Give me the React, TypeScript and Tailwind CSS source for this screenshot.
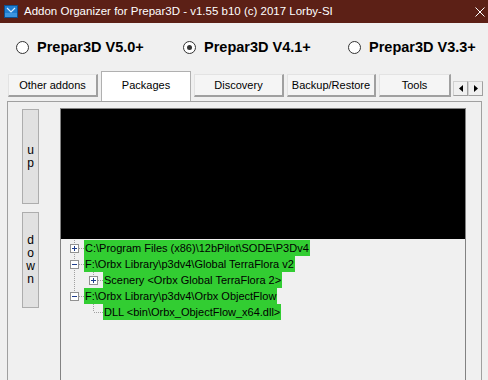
import React from 'react';

const font = { fontFamily: '"Liberation Sans", Arial, sans-serif' };

function Radio({ label, checked, width }: { label: string; checked?: boolean; width: string }) {
    return (
        <div className={`flex items-center gap-[8px] ${width}`}>
            <div className="w-[13px] h-[13px] rounded-full border border-[#333333] bg-white flex items-center justify-center shrink-0">
                {checked && <div className="w-[5px] h-[5px] rounded-full bg-[#333333]" />}
            </div>
            <span className="text-[14.5px] font-bold text-black leading-none whitespace-nowrap">{label}</span>
        </div>
    );
}

function Tab({ label, selected, width = 'w-[90px]' }: { label: string; selected?: boolean; width?: string }) {
    if (selected) {
        return (
            <div className={`${width} h-[30px] bg-white border border-[#b0b0b0] border-b-0 flex items-center justify-center text-[11px] text-black pb-[3px]`}>
                {label}
            </div>
        );
    }
    return (
        <div className={`${width} h-[23px] mt-[3px] bg-[#f5f5f5] border-t border-l border-[#e3e3e3] border-r-2 border-r-[#a0a0a0] border-b-2 border-b-[#a0a0a0] flex items-center justify-center text-[11px] text-black`}>
            {label}
        </div>
    );
}

interface Node {
    level: number;
    label: string;
}

const nodes: Node[] = [
    { level: 0, label: 'C:\\Program Files (x86)\\12bPilot\\SODE\\P3Dv4' },
    { level: 0, label: 'F:\\Orbx Library\\p3dv4\\Global TerraFlora v2' },
    { level: 1, label: 'Scenery <Orbx Global TerraFlora 2>' },
    { level: 0, label: 'F:\\Orbx Library\\p3dv4\\Orbx ObjectFlow' },
    { level: 1, label: 'DLL <bin\\Orbx_ObjectFlow_x64.dll>' },
];

function ExpBox({ x, y, plus }: { x: number; y: number; plus?: boolean }) {
    return (
        <g>
            <rect x={x + 0.5} y={y + 0.5} width={8} height={8} fill="white" stroke="#919191" />
            <line x1={x + 2} y1={y + 4.5} x2={x + 7} y2={y + 4.5} stroke="#1e3d8c" />
            {plus && <line x1={x + 4.5} y1={y + 2} x2={x + 4.5} y2={y + 7} stroke="#1e3d8c" />}
        </g>
    );
}

function TreeLines() {
    // row centers: 8, 24, 40, 56, 72 (relative to tree top)
    const dot = { stroke: '#a0a0a0', strokeDasharray: '1 1' };
    return (
        <svg className="absolute left-0 top-0" width="406" height="100">
            <line x1={13.5} y1={0} x2={13.5} y2={52} {...dot} />
            <line x1={18} y1={8.5} x2={24} y2={8.5} {...dot} />
            <line x1={18} y1={24.5} x2={24} y2={24.5} {...dot} />
            <line x1={18} y1={56.5} x2={24} y2={56.5} {...dot} />
            <line x1={32.5} y1={28} x2={32.5} y2={36} {...dot} />
            <line x1={37} y1={40.5} x2={42} y2={40.5} {...dot} />
            <line x1={32.5} y1={60} x2={32.5} y2={72} {...dot} />
            <line x1={33} y1={72.5} x2={42} y2={72.5} {...dot} />
            <ExpBox x={9} y={4} plus />
            <ExpBox x={9} y={20} />
            <ExpBox x={28} y={36} plus />
            <ExpBox x={9} y={52} />
        </svg>
    );
}

export default function App() {
    return (
        <div className="w-[488px] h-[380px] bg-[#f0f0f0] overflow-hidden flex flex-col" style={font}>
            {/* title bar */}
            <div className="h-[23px] bg-[#5c2016] flex items-center pl-[4px] pr-[3px] shrink-0">
                <svg width="14" height="13" viewBox="0 0 14 13">
                    <rect x="0.5" y="0.5" width="13" height="12" fill="#1f7dd0" stroke="#0d4f8f" />
                    <rect x="1" y="8" width="12" height="4" fill="#3b95e0" />
                    <path d="M3 3 L7 7 L11 3" fill="none" stroke="#d6ecff" strokeWidth="1.2" />
                </svg>
                <span className="ml-[6px] text-[11.5px] text-white leading-none whitespace-nowrap">
                    Addon Organizer for Prepar3D - v1.55 b10 (c) 2017 Lorby-SI
                </span>
                <svg className="ml-auto" width="10" height="10" viewBox="0 0 10 10">
                    <path d="M0.5 0.5 L9.5 9.5 M9.5 0.5 L0.5 9.5" stroke="white" strokeWidth="1" />
                </svg>
            </div>

            {/* radio row */}
            <div className="h-[48px] flex items-center pl-[16px] shrink-0">
                <Radio label="Prepar3D V5.0+" width="w-[167px]" />
                <Radio label="Prepar3D V4.1+" checked width="w-[165px]" />
                <Radio label="Prepar3D V3.3+" width="w-[135px]" />
            </div>

            {/* tabs */}
            <div className="h-[30px] flex items-start pl-[8px] gap-[3px] shrink-0">
                <Tab label="Other addons" />
                <Tab label="Packages" selected />
                <Tab label="Discovery" />
                <Tab label="Backup/Restore" width="w-[89px]" />
                <Tab label="Tools" width="w-[72px]" />
                <div className="flex mt-[10px] ml-[-1px]">
                    <div className="w-[15px] h-[15px] bg-[#f0f0f0] border border-[#d0d0d0] border-r-[#a0a0a0] border-b-[#a0a0a0] flex items-center justify-center">
                        <svg width="4" height="7" viewBox="0 0 4 7"><path d="M4 0 L0 3.5 L4 7 Z" fill="black" /></svg>
                    </div>
                    <div className="w-[15px] h-[15px] bg-[#f0f0f0] border border-[#d0d0d0] border-r-[#a0a0a0] border-b-[#a0a0a0] flex items-center justify-center">
                        <svg width="4" height="7" viewBox="0 0 4 7"><path d="M0 0 L4 3.5 L0 7 Z" fill="black" /></svg>
                    </div>
                </div>
            </div>

            {/* tab page */}
            <div className="ml-[7px] w-[475px] flex-1 border border-b-0 border-[#a0a0a0] bg-[#f0f0f0] flex pl-[14px] pt-[6px]">
                <div className="flex flex-col gap-[8px] pt-[1px] shrink-0">
                    <div className="w-[17px] h-[95px] bg-[#e1e1e1] border border-[#adadad] flex flex-col items-center justify-center text-[12px] text-black">
                        <span className="leading-[13px]">u</span>
                        <span className="leading-[13px]">p</span>
                    </div>
                    <div className="w-[17px] h-[96px] bg-[#e1e1e1] border border-[#adadad] flex flex-col items-center justify-center text-[12px] text-black">
                        <span className="leading-[13px]">d</span>
                        <span className="leading-[13px]">o</span>
                        <span className="leading-[13px]">w</span>
                        <span className="leading-[13px]">n</span>
                    </div>
                </div>
                <div className="ml-[21px] w-[406px] border border-b-0 border-[#828282] flex flex-col">
                    <div className="h-[130px] bg-black shrink-0" />
                    <div className="relative pt-[1px] flex-1">
                        <div className="relative h-[100px]">
                            <TreeLines />
                            <div className="relative flex flex-col">
                                {nodes.map((n, i) => (
                                    <div key={i} className={`h-[16px] flex ${n.level === 0 ? 'pl-[23px]' : 'pl-[42px]'}`}>
                                        <span className="bg-[#32cd32] text-black text-[11px] leading-[16px] px-[1px] whitespace-nowrap">
                                            {n.label}
                                        </span>
                                    </div>
                                ))}
                            </div>
                        </div>
                    </div>
                </div>
            </div>
        </div>
    );
}
